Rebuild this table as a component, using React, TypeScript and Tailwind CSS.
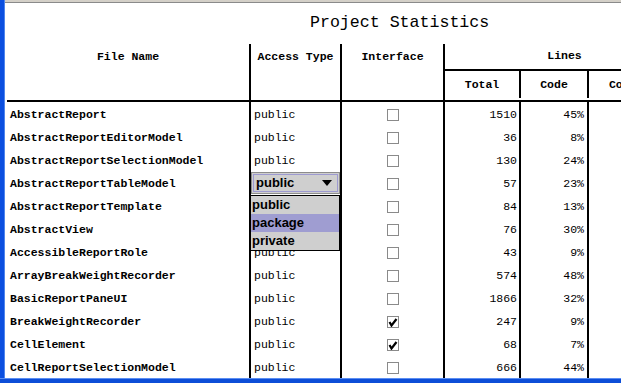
import React from 'react';

const rows = [
  { name: 'AbstractReport', total: 1510, code: '45%', iface: false },
  { name: 'AbstractReportEditorModel', total: 36, code: '8%', iface: false },
  { name: 'AbstractReportSelectionModel', total: 130, code: '24%', iface: false },
  { name: 'AbstractReportTableModel', total: 57, code: '23%', iface: false, editing: true },
  { name: 'AbstractReportTemplate', total: 84, code: '13%', iface: false },
  { name: 'AbstractView', total: 76, code: '30%', iface: false },
  { name: 'AccessibleReportRole', total: 43, code: '9%', iface: false },
  { name: 'ArrayBreakWeightRecorder', total: 574, code: '48%', iface: false },
  { name: 'BasicReportPaneUI', total: 1866, code: '32%', iface: false },
  { name: 'BreakWeightRecorder', total: 247, code: '9%', iface: true },
  { name: 'CellElement', total: 68, code: '7%', iface: true },
  { name: 'CellReportSelectionModel', total: 666, code: '44%', iface: false },
];

const Checkbox: React.FC<{ checked: boolean }> = ({ checked }) => (
  <div className="w-[12px] h-[12px] border border-[#8a8a8a] bg-white flex items-center justify-center">
    {checked && (
      <svg width="10" height="10" viewBox="0 0 10 10">
        <path d="M1.5 5 L3.5 8.5 L8.5 2" fill="none" stroke="#000" strokeWidth="2.2" />
      </svg>
    )}
  </div>
);

const AccessCombo: React.FC = () => (
  <div className="relative w-full pt-[1px]">
    <div className="h-[22px] border border-[#8c8c8c] bg-[#cfcfcf] p-[1px]">
      <div className="h-full border border-[#9d9ad0] flex items-center justify-between pl-[2px] pr-[5px] font-['Liberation_Sans',sans-serif] font-bold text-[13px]">
        <span>public</span>
        <svg width="10" height="6" viewBox="0 0 10 6">
          <path d="M0 0 H10 L5 6 Z" fill="#000" />
        </svg>
      </div>
    </div>
    <div className="absolute left-[-1px] top-[24px] w-[90px] z-10 bg-[#cfcfcf] border border-black font-['Liberation_Sans',sans-serif] font-bold text-[13px]">
      <div className="h-[18px] leading-[18px] pl-[1px]">public</div>
      <div className="h-[18px] leading-[18px] pl-[1px] bg-[#9f9dd1]">package</div>
      <div className="h-[18px] leading-[18px] pl-[1px]">private</div>
    </div>
  </div>
);

export default function App() {
  return (
    <div className="w-[621px] h-[383px] overflow-hidden bg-white flex flex-col font-['Liberation_Mono',monospace] text-black">
      <div className="flex flex-1 min-h-0">
        <div className="w-[5px] shrink-0 bg-[#0b4fe0] border-r border-[#4f86ee]" />
        <div className="flex-1 min-w-0 flex flex-col">
          <div className="h-[3px] shrink-0 bg-[#d4d0c8] border-b border-[#8a8a8a]" />

          <div className="h-[41px] shrink-0 pl-[305px] pt-[10px] text-[16.6px] leading-[20px] whitespace-nowrap">
            Project Statistics
          </div>

          <div className="ml-[2px] flex flex-col text-[11.5px]">
            <div className="flex border-b-2 border-black whitespace-nowrap font-bold">
              <div className="w-[242px] shrink-0 h-[56px]">
                <div className="h-[25px] flex items-center justify-center">File Name</div>
              </div>
              <div className="w-[91px] shrink-0 border-l-2 border-black">
                <div className="h-[25px] flex items-center justify-center">Access Type</div>
              </div>
              <div className="w-[103px] shrink-0 border-l-2 border-black">
                <div className="h-[25px] flex items-center justify-center">Interface</div>
              </div>
              <div className="w-[241px] shrink-0 border-l-2 border-black flex flex-col">
                <div className="h-[27px] border-b-2 border-black flex items-center justify-center pb-[2px]">Lines</div>
                <div className="flex h-[27px]">
                  <div className="w-[74px] shrink-0 flex items-center justify-center">Total</div>
                  <div className="w-[68px] shrink-0 border-l-2 border-black flex items-center justify-center">Code</div>
                  <div className="w-[97px] shrink-0 border-l-2 border-black flex items-center justify-center">Comments</div>
                </div>
              </div>
            </div>

            {rows.map((r) => (
              <div key={r.name} className="flex h-[23px] whitespace-nowrap">
                <div className="w-[242px] shrink-0 pl-[3px] pt-[2px] flex items-center font-bold">{r.name}</div>
                <div className="w-[91px] shrink-0 border-l-2 border-black flex items-center">
                  {r.editing ? <AccessCombo /> : <span className="pl-[3px] pt-[2px]">public</span>}
                </div>
                <div className="w-[103px] shrink-0 border-l-2 border-black flex items-center justify-center pt-[2px] pl-[1px]">
                  <Checkbox checked={r.iface} />
                </div>
                <div className="w-[76px] shrink-0 border-l-2 border-black flex items-center justify-end pr-[2px] pt-[2px]">{r.total}</div>
                <div className="w-[68px] shrink-0 border-l-2 border-black flex items-center justify-end pr-[3px] pt-[2px]">{r.code}</div>
                <div className="w-[97px] shrink-0 border-l-2 border-black" />
              </div>
            ))}
          </div>
        </div>
      </div>
      <div className="h-[5px] shrink-0 bg-[#0d4ed8] border-t border-[#5b8ef2]" />
    </div>
  );
}
